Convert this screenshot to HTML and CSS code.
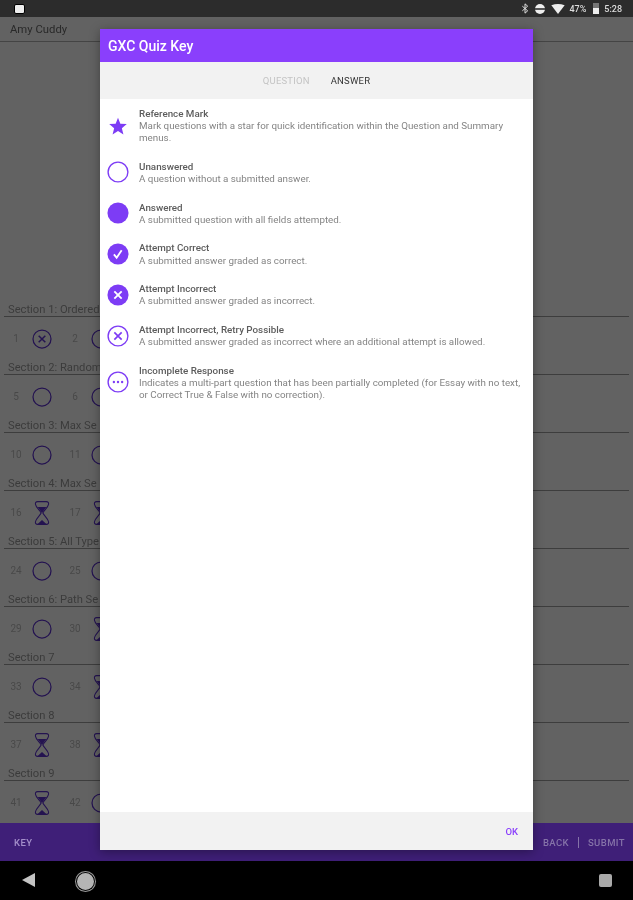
FILE: index.html
```html
<!DOCTYPE html>
<html lang="en">
<head>
  <meta charset="UTF-8" />
  <meta name="viewport" content="width=device-width, initial-scale=1.0"/>
  <title>GXC Quiz Key</title>
  <link rel="stylesheet" href="styles.css">
</head>
<body>

  <svg class="defs" width="0" height="0">
    <symbol id="i-star" viewBox="-2 -2 28 28"><path d="M12 1.500l3 7.600 8.200.5-6.300 5.200 2 8-6.900-4.400-6.900 4.400 2-8L.800 9.600 9 9.100z"/></symbol>
    <symbol id="i-open" viewBox="0 0 24 24"><circle cx="12" cy="12" r="10.800" fill="none" stroke="currentColor" stroke-width="1.500"/></symbol>
    <symbol id="i-full" viewBox="0 0 24 24"><circle cx="12" cy="12" r="11.500"/></symbol>
    <symbol id="i-check" viewBox="0 0 24 24"><circle cx="12" cy="12" r="11.500"/><path d="M7.500 12.500l3 3.500 5.500-8" fill="none" stroke="#fff" stroke-width="2"/></symbol>
    <symbol id="i-cross" viewBox="0 0 24 24"><circle cx="12" cy="12" r="11.500"/><path d="M8 8l8 8M16 8l-8 8" fill="none" stroke="#fff" stroke-width="2"/></symbol>
    <symbol id="i-retry" viewBox="0 0 24 24"><circle cx="12" cy="12" r="10.800" fill="none" stroke="currentColor" stroke-width="1.500"/><path d="M8 8l8 8M16 8l-8 8" fill="none" stroke="currentColor" stroke-width="1.800"/></symbol>
    <symbol id="i-dots" viewBox="0 0 24 24"><circle cx="12" cy="12" r="10.800" fill="none" stroke="currentColor" stroke-width="1.500"/><circle cx="7.500" cy="12" r="1.300"/><circle cx="12" cy="12" r="1.300"/><circle cx="16.500" cy="12" r="1.300"/></symbol>
    <symbol id="i-glass" viewBox="4 0 16 24">
      <path d="M8 1.500h8q2.500 0 2 2.500c-.5 3-4 5.500-5.200 8 1.200 2.500 4.700 5 5.200 8q.5 2.500-2 2.500H8q-2.500 0-2-2.500c.5-3 4-5.500 5.200-8C10 9.500 6.500 7 6 4q-.5-2.500 2-2.500z" fill="none" stroke="currentColor" stroke-width="1"/>
      <path d="M8 6.500h8L12 12zM12 18.500l4.500 4h-9z"/>
    </symbol>
  </svg>

  <div class="status-bar">
    <span class="status-app"></span>
    <div class="status-right">
      <svg class="st-icon" viewBox="0 0 12 16"><path d="M2 4.500l8 7-4 3.500V1l4 3.500-8 7" fill="none" stroke="#ddd" stroke-width="1.500"/></svg>
      <span class="st-dnd"></span>
      <svg class="st-wifi" viewBox="0 0 16 12"><path d="M0 1.500Q8-1.500 16 1.500L8 12z" fill="#eee"/></svg>
      <span class="st-text">47%</span>
      <span class="st-batt"></span>
      <span class="st-text">5:28</span>
    </div>
  </div>

  <div class="app">
    <header class="app-header">Amy Cuddy</header>

    <main class="sections">
      <section class="section">
        <h2>Section 1: Ordered</h2>
        <div class="row">
          <div class="item"><span>1</span><svg><use href="#i-retry"/></svg></div>
          <div class="item"><span>2</span><svg><use href="#i-open"/></svg></div>
        </div>
      </section>
      <section class="section">
        <h2>Section 2: Random</h2>
        <div class="row">
          <div class="item"><span>5</span><svg><use href="#i-open"/></svg></div>
          <div class="item"><span>6</span><svg><use href="#i-open"/></svg></div>
        </div>
      </section>
      <section class="section">
        <h2>Section 3: Max Se</h2>
        <div class="row">
          <div class="item"><span>10</span><svg><use href="#i-open"/></svg></div>
          <div class="item"><span>11</span><svg><use href="#i-open"/></svg></div>
        </div>
      </section>
      <section class="section">
        <h2>Section 4: Max Se</h2>
        <div class="row">
          <div class="item"><span>16</span><svg><use href="#i-glass"/></svg></div>
          <div class="item"><span>17</span><svg><use href="#i-glass"/></svg></div>
        </div>
      </section>
      <section class="section">
        <h2>Section 5: All Type</h2>
        <div class="row">
          <div class="item"><span>24</span><svg><use href="#i-open"/></svg></div>
          <div class="item"><span>25</span><svg><use href="#i-open"/></svg></div>
        </div>
      </section>
      <section class="section">
        <h2>Section 6: Path Se</h2>
        <div class="row">
          <div class="item"><span>29</span><svg><use href="#i-open"/></svg></div>
          <div class="item"><span>30</span><svg><use href="#i-glass"/></svg></div>
        </div>
      </section>
      <section class="section">
        <h2>Section 7</h2>
        <div class="row">
          <div class="item"><span>33</span><svg><use href="#i-open"/></svg></div>
          <div class="item"><span>34</span><svg><use href="#i-glass"/></svg></div>
        </div>
      </section>
      <section class="section">
        <h2>Section 8</h2>
        <div class="row">
          <div class="item"><span>37</span><svg><use href="#i-glass"/></svg></div>
          <div class="item"><span>38</span><svg><use href="#i-glass"/></svg></div>
        </div>
      </section>
      <section class="section">
        <h2>Section 9</h2>
        <div class="row">
          <div class="item"><span>41</span><svg><use href="#i-glass"/></svg></div>
          <div class="item"><span>42</span><svg><use href="#i-open"/></svg></div>
        </div>
      </section>
    </main>

    <div class="scrim"></div>

    <footer class="app-footer">
      <a class="foot-key">KEY</a>
      <div class="foot-right">
        <a>BACK</a>
        <i class="foot-sep"></i>
        <a>SUBMIT</a>
      </div>
    </footer>

    <div class="dialog-wrap">
      <div class="dialog">
        <div class="dialog-title">GXC Quiz Key</div>
        <div class="tabs">
          <span class="tab">QUESTION</span>
          <span class="tab tab-active">ANSWER</span>
        </div>
        <ul class="key-list">
          <li class="key-row">
            <svg class="key-icon"><use href="#i-star"/></svg>
            <div class="key-text">
              <h3>Reference Mark</h3>
              <p>Mark questions with a star for quick identification within the Question and Summary menus.</p>
            </div>
          </li>
          <li class="key-row">
            <svg class="key-icon"><use href="#i-open"/></svg>
            <div class="key-text">
              <h3>Unanswered</h3>
              <p>A question without a submitted answer.</p>
            </div>
          </li>
          <li class="key-row">
            <svg class="key-icon"><use href="#i-full"/></svg>
            <div class="key-text">
              <h3>Answered</h3>
              <p>A submitted question with all fields attempted.</p>
            </div>
          </li>
          <li class="key-row">
            <svg class="key-icon"><use href="#i-check"/></svg>
            <div class="key-text">
              <h3>Attempt Correct</h3>
              <p>A submitted answer graded as correct.</p>
            </div>
          </li>
          <li class="key-row">
            <svg class="key-icon"><use href="#i-cross"/></svg>
            <div class="key-text">
              <h3>Attempt Incorrect</h3>
              <p>A submitted answer graded as incorrect.</p>
            </div>
          </li>
          <li class="key-row">
            <svg class="key-icon"><use href="#i-retry"/></svg>
            <div class="key-text">
              <h3>Attempt Incorrect, Retry Possible</h3>
              <p>A submitted answer graded as incorrect where an additional attempt is allowed.</p>
            </div>
          </li>
          <li class="key-row">
            <svg class="key-icon"><use href="#i-dots"/></svg>
            <div class="key-text">
              <h3>Incomplete Response</h3>
              <p>Indicates a multi-part question that has been partially completed (for Essay with no text, or Correct True &amp; False with no correction).</p>
            </div>
          </li>
        </ul>
        <div class="dialog-foot"><a>OK</a></div>
      </div>
    </div>
  </div>

  <nav class="nav-bar">
    <span class="nav-back"></span>
    <span class="nav-home"></span>
    <span class="nav-recent"></span>
  </nav>

</body>
</html>
```

FILE: styles.css
```css
* {
  box-sizing: border-box;
}
html, body {
  height: 100%;
}
body {
  margin: 0;
  display: flex;
  flex-direction: column;
  height: 900px;
  overflow: hidden;
  font-family: Roboto, sans-serif;
  background: #000;
  filter: blur(0.5px);
}
.defs {
  position: absolute;
}

/* status bar */
.status-bar {
  height: 17px;
  flex: none;
  background: #2c2c2c;
  display: flex;
  align-items: center;
  justify-content: space-between;
  padding: 0 11px 0 14px;
}
.status-app {
  width: 11px;
  height: 10px;
  background: #eee;
  border: 1px solid #000;
  border-radius: 2px;
}
.status-right {
  display: flex;
  align-items: center;
  gap: 6px;
}
.st-icon {
  width: 8px;
  height: 11px;
}
.st-dnd {
  width: 10px;
  height: 10px;
  border-radius: 50%;
  background: linear-gradient(#eee 40%, #555 40%, #555 58%, #eee 58%);
}
.st-wifi {
  width: 14px;
  height: 10px;
  margin-right: -2px;
}
.st-text {
  font-size: 9px;
  font-weight: 500;
  color: #ddd;
}
.st-batt {
  width: 6px;
  height: 11px;
  background: linear-gradient(#777 45%, #eee 45%);
  margin-left: 1px;
  margin-right: -1px;
}

/* page behind the dialog */
.app {
  flex: 1;
  position: relative;
  display: flex;
  flex-direction: column;
  min-height: 0;
  background: #f6f6f6;
}
.app-header {
  height: 25px;
  flex: none;
  padding: 6px 10px 0;
  font-size: 11.300px;
  color: #666;
  border-bottom: 1px solid #aaa;
}
.sections {
  flex: 1;
  min-height: 0;
  padding-top: 260px;
  overflow: hidden;
}
.section {
  height: 58px;
  margin: 0 4px;
}
.section h2 {
  margin: 0;
  height: 15px;
  padding-left: 4px;
  font-size: 11.200px;
  line-height: 15px;
  font-weight: 400;
  color: #959595;
  white-space: nowrap;
  border-bottom: 1px solid #999;
}
.row {
  display: flex;
  height: 43px;
  align-items: center;
}
.item {
  display: flex;
  align-items: center;
  width: 59px;
  font-size: 10px;
  color: #b5b5b5;
}
.item span {
  width: 24px;
  text-align: center;
}
.item svg {
  width: 20px;
  height: 26px;
  margin-left: 4px;
  fill: #5a30c8;
  color: #5a30c8;
}
.scrim {
  position: absolute;
  inset: 0;
  background: rgba(0, 0, 0, 0.6);
}
.app-footer {
  position: relative;
  height: 38px;
  flex: none;
  background: #3f1f78;
  display: flex;
  align-items: center;
  justify-content: space-between;
  padding: 0 8px 0 14px;
  font-size: 9.500px;
  font-weight: 500;
  letter-spacing: .4px;
}
.foot-key {
  color: #a48fca;
}
.foot-right {
  display: flex;
  align-items: center;
  gap: 9px;
  color: #8573a8;
}
.foot-sep {
  width: 1px;
  height: 11px;
  background: #8573a8;
}

/* dialog */
.dialog-wrap {
  position: absolute;
  inset: 0;
  display: flex;
  justify-content: center;
  padding: 12px 0 11px;
}
.dialog {
  width: 433px;
  display: flex;
  flex-direction: column;
  background: #fff;
  box-shadow: 0 2px 10px rgba(0, 0, 0, 0.35);
}
.dialog-title {
  height: 33px;
  flex: none;
  background: #8a3ffc;
  color: #fff;
  font-size: 14px;
  font-weight: 500;
  line-height: 34px;
  padding-left: 8px;
}
.tabs {
  height: 37px;
  flex: none;
  background: #f2f2f2;
  display: flex;
  justify-content: center;
  align-items: center;
  gap: 21px;
  font-size: 9.500px;
  letter-spacing: .2px;
}
.tab {
  color: #c4c4c4;
}
.tab-active {
  color: #333;
}
.key-list {
  list-style: none;
  flex: 1;
  margin: 0;
  padding: 8px 8px 0 7px;
  display: flex;
  flex-direction: column;
  gap: 15.500px;
}
.key-row {
  display: flex;
  align-items: center;
  gap: 10px;
}
.key-icon {
  width: 22px;
  height: 22px;
  flex: none;
  fill: #7d3cf5;
  color: #7d3cf5;
}
.key-text {
  flex: 1;
  min-width: 0;
}
.key-text h3 {
  margin: 0;
  font-size: 9.800px;
  line-height: 13.300px;
  font-weight: 500;
  color: #5c5c5c;
}
.key-text p {
  margin: 0;
  font-size: 9.800px;
  line-height: 12px;
  color: #848484;
}
.dialog-foot {
  height: 38px;
  flex: none;
  background: #f2f2f2;
  display: flex;
  align-items: center;
  justify-content: flex-end;
  padding-right: 15px;
  font-size: 9.500px;
  font-weight: 500;
  color: #8a3ffc;
}

/* nav bar */
.nav-bar {
  height: 39px;
  flex: none;
  background: #000;
  position: relative;
}
.nav-back {
  position: absolute;
  left: 22px;
  top: 12px;
  border-style: solid;
  border-width: 7.500px 13px 7.500px 0;
  border-color: transparent #c4c4c4 transparent transparent;
}
.nav-home {
  position: absolute;
  left: 76px;
  top: 11px;
  width: 19px;
  height: 19px;
  border-radius: 50%;
  background: #b5b5b5;
  box-shadow: 0 0 0 1px #000 inset, 0 0 0 1px #999;
}
.nav-recent {
  position: absolute;
  left: 599px;
  top: 13px;
  width: 13px;
  height: 13px;
  border-radius: 2px;
  background: #aaa;
}
```
